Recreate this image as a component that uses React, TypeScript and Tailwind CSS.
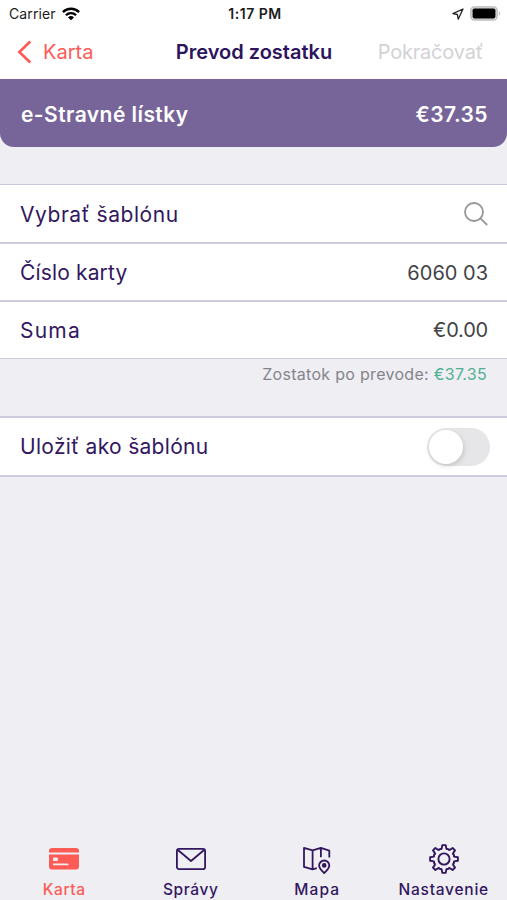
import type { ReactNode } from 'react';

const GEAR_TEETH = 8;

// Outline of the gear: narrow flat-topped teeth joined by scooped gaps
function gearPath() {
  const point = (radius: number, degrees: number) => {
    const angle = ((degrees - 90) * Math.PI) / 180;
    const x = 15 + radius * Math.cos(angle);
    const y = 15 + radius * Math.sin(angle);
    return `${x.toFixed(2)} ${y.toFixed(2)}`;
  };

  let path = `M${point(14, -7)}`;
  for (let i = 0; i < GEAR_TEETH; i++) {
    const center = i * 45;
    path += `L${point(14, center + 7)}L${point(11.4, center + 11)}`;
    path += `Q${point(9.6, center + 15)} ${point(10.7, center + 19)}`;
    path += `L${point(10.7, center + 26)}`;
    path += `Q${point(9.6, center + 30)} ${point(11.4, center + 34)}`;
    path += `L${point(14, center + 38)}`;
  }
  return `${path}Z`;
}

function WifiIcon() {
  return (
    <svg width="18" height="14" viewBox="0 0 18 14" fill="none" stroke="#000" strokeWidth="2.3">
      <path d="M.9 5.1a11.5 11.5 0 0 1 16.2 0" />
      <path d="M3.9 8.3a7.2 7.2 0 0 1 10.2 0" />
      <path d="M9 13.3 6 10.5a4.3 4.3 0 0 1 6 0Z" fill="#000" stroke="none" />
    </svg>
  );
}

function BatteryIcon() {
  return (
    <svg width="31" height="15" viewBox="0 0 31 15">
      <rect x=".8" y=".8" width="26.4" height="13.2" rx="3.6" fill="#d8d8d8" stroke="#bdbdbd" strokeWidth="1.3" />
      <rect x="2.6" y="2.4" width="22.8" height="10" rx="1.8" fill="#000" />
      <path d="M28.8 5.2c1.9.9 1.9 3.6 0 4.5Z" fill="#bdbdbd" />
    </svg>
  );
}

function CardIcon() {
  return (
    <svg width="30" height="30" viewBox="0 0 30 30">
      <path d="M0 8.6V7a3 3 0 0 1 3-3h24a3 3 0 0 1 3 3v1.6Z" fill="#fd5b55" />
      <path d="M0 10.6h30V22.4a3 3 0 0 1-3 3H3a3 3 0 0 1-3-3Z" fill="#fd5b55" />
      <rect x="4" y="13.4" width="4.8" height="3.6" rx=".8" fill="#f4eef2" />
      <path d="M4.8 20.4h13.8" stroke="#f4eef2" strokeWidth="1.8" strokeLinecap="round" />
    </svg>
  );
}

function MailIcon() {
  return (
    <svg width="30" height="30" viewBox="0 0 30 30" fill="none" stroke="#32175f" strokeWidth="1.8" strokeLinejoin="round">
      <rect x=".9" y="4.9" width="28.2" height="20.2" rx="2.2" />
      <path d="M1.6 5.8 15 17 28.4 5.8" />
    </svg>
  );
}

function MapIcon() {
  return (
    <svg width="30" height="30" viewBox="0 0 30 30" fill="none" stroke="#32175f" strokeWidth="1.8" strokeLinejoin="round">
      <path d="M14.8 24.2 10.6 25.3 2 22.9V3.9l8.6 2.4 8.3-2.4 8.4 2.7V13.4M10.6 6.3v19M18.9 3.9v9.4" />
      <path d="M22.2 29.2c-3.2-3-5.1-5-5.1-7.6a5.1 5.1 0 0 1 10.2 0c0 2.600-1.900 4.600-5.100 7.600Z" />
      <circle cx="22.2" cy="21.4" r="1.4" fill="#32175f" />
    </svg>
  );
}

function GearIcon() {
  return (
    <svg width="30" height="30" viewBox="0 0 30 30" fill="none" stroke="#32175f" strokeWidth="1.9" strokeLinejoin="round">
      <path d={gearPath()} />
      <circle cx="15" cy="15" r="5.6" />
    </svg>
  );
}

const tabs = [
  { label: 'Karta', icon: <CardIcon />, color: 'text-[#fd5b55]', tracking: 'tracking-[0.6px]' },
  { label: 'Správy', icon: <MailIcon />, color: 'text-[#32175f]', tracking: 'tracking-[0.6px]' },
  { label: 'Mapa', icon: <MapIcon />, color: 'text-[#32175f]', tracking: 'tracking-[1.1px]' },
  { label: 'Nastavenie', icon: <GearIcon />, color: 'text-[#32175f]', tracking: 'tracking-[0.75px]' },
];

interface RowProps {
  label: string;
  size: string;
  tracking: string;
  children: ReactNode;
}

function Row({ label, size, tracking, children }: RowProps) {
  return (
    <div className={`flex items-center justify-between border-[#cfcbdf] bg-white pl-5 pr-[19px] ${size}`}>
      <span className={`text-[21px] leading-none text-[#32175f] ${tracking}`}>{label}</span>
      {children}
    </div>
  );
}

export default function App() {
  return (
    <div className="flex h-[900px] w-[507px] flex-col overflow-hidden whitespace-nowrap bg-[#efeef3] font-['Inter',sans-serif]">
      {/* Status bar */}
      <div className="grid h-[27px] grid-cols-3 items-center bg-white pl-[9px] pr-1.5 text-[#1c1c1c]">
        <div className="flex items-center gap-1.5">
          <span className="text-[14px] leading-none tracking-[0.1px]">Carrier</span>
          <WifiIcon />
        </div>
        <span className="text-center text-[14px] font-semibold leading-none tracking-[0.5px]">1:17 PM</span>
        <div className="flex items-center justify-end gap-1.5">
          <svg width="12" height="12" viewBox="0 0 12 12" fill="none" stroke="#222" strokeWidth="1.3" strokeLinejoin="round">
            <path d="M11 1 .9 5.600l4.500.9.8 4.700Z" />
          </svg>
          <BatteryIcon />
        </div>
      </div>

      {/* Navigation bar */}
      <div className="grid h-[52px] grid-cols-[1fr_auto_1fr] items-center bg-white pb-[2px] pl-[17px] pr-6 text-[20px] leading-none">
        <div className="flex items-center gap-[11px] text-[#fd5b55]">
          <svg width="15" height="24" viewBox="0 0 15 24" fill="none" stroke="#fd5b55" strokeWidth="2.6">
            <path d="M13.300 1.500 2.300 12l11 10.500" />
          </svg>
          <span>Karta</span>
        </div>
        <h1 className="ml-2 font-semibold text-[#2d145d]">Prevod zostatku</h1>
        <span className="text-right tracking-[-0.2px] text-[#d2d2d4]">Pokračovať</span>
      </div>

      {/* Balance */}
      <div className="flex h-[68px] items-center justify-between rounded-b-[14px] bg-[#776599] pl-[21px] pr-[19px] pt-[3px] text-[21px] font-semibold leading-none text-white">
        <span className="tracking-[0.45px]">e-Stravné lístky</span>
        <span className="tracking-[0.45px]">€37.35</span>
      </div>

      {/* Transfer form */}
      <div className="mt-[37px] border-t border-[#c9c5da]">
        <Row label="Vybrať šablónu" size="h-[59px] border-b-2 pt-[2px]" tracking="tracking-[0.55px]">
          <svg className="mb-px" width="24" height="24" viewBox="0 0 24 24" fill="none" stroke="#97979a" strokeWidth="1.8">
            <circle cx="10" cy="10" r="9" />
            <path d="m16.400 16.400 6.800 6.600" />
          </svg>
        </Row>
        <Row label="Číslo karty" size="h-[58px] border-b-2 pt-px" tracking="tracking-[0.15px]">
          <span className="text-[20px] leading-none text-[#434347]">6060 03</span>
        </Row>
        <Row label="Suma" size="h-[57px] border-b" tracking="tracking-[1.2px]">
          <span className="text-[20px] leading-none tracking-[-0.2px] text-[#434347]">€0.00</span>
        </Row>
      </div>
      <p className="mt-[7px] pr-5 text-right text-[16px] leading-4 tracking-[0.3px] text-[#85848c]">
        Zostatok po prevode: <span className="text-[#4fb193]">€37.35</span>
      </p>

      {/* Template switch */}
      <div className="mt-[34px] border-t-2 border-[#cfcbdf]">
        <Row label="Uložiť ako šablónu" size="h-[59px] border-b-2" tracking="tracking-[0.3px]">
          <button
            type="button"
            role="switch"
            aria-checked="false"
            aria-label="Uložiť ako šablónu"
            className="-mr-[2px] flex h-[38px] w-[63px] items-center rounded-full bg-[#e6e6e8] pl-[2px]"
          >
            <span className="size-[34px] rounded-full bg-white shadow-[1px_2px_5px_rgba(0,0,0,0.15)]" />
          </button>
        </Row>
      </div>

      {/* Tab bar */}
      <nav className="ml-px mt-auto grid h-[60px] grid-cols-4">
        {tabs.map((tab) => (
          <div key={tab.label} className={`flex flex-col items-center gap-2 pt-1 ${tab.color}`}>
            {tab.icon}
            <span className={`text-[15.5px] font-medium leading-none ${tab.tracking}`}>{tab.label}</span>
          </div>
        ))}
      </nav>
    </div>
  );
}
